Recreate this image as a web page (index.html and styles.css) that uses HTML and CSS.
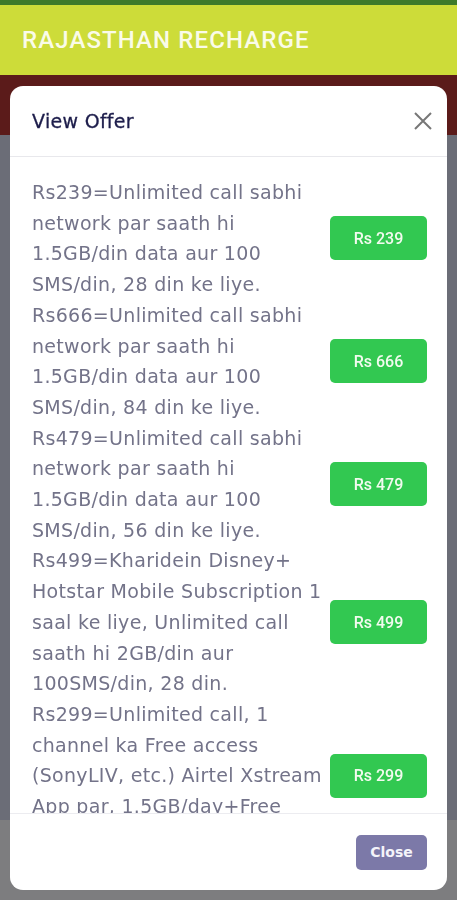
FILE: index.html
```html
<!DOCTYPE html>
<html lang="en">

<head>
    <meta charset="UTF-8">
    <meta name="viewport" content="width=device-width, initial-scale=1.0">
    <title>Rajasthan Recharge</title>
    <link rel="stylesheet" href="styles.css">
</head>

<body>
    <div class="topline"></div>
    <div class="header">
        <h1>RAJASTHAN RECHARGE</h1>
    </div>
    <div class="banner"></div>
    <div class="page"></div>

    <div class="backdrop">
        <div class="modal">
            <div class="modal-header">
                <h2>View Offer</h2>
                <button class="btn-x" aria-label="Close">
                    <svg width="20" height="20" viewBox="0 0 20 20">
                        <path d="M2 2 L18 18 M18 2 L2 18" stroke="#777" stroke-width="2" fill="none" />
                    </svg>
                </button>
            </div>

            <div class="modal-body">
                <div class="offer">
                    <p>Rs239=Unlimited call sabhi network par saath hi 1.5GB/din data aur 100 SMS/din, 28 din ke liye.</p>
                    <button class="btn-price">Rs 239</button>
                </div>
                <div class="offer">
                    <p>Rs666=Unlimited call sabhi network par saath hi 1.5GB/din data aur 100 SMS/din, 84 din ke liye.</p>
                    <button class="btn-price">Rs 666</button>
                </div>
                <div class="offer">
                    <p>Rs479=Unlimited call sabhi network par saath hi 1.5GB/din data aur 100 SMS/din, 56 din ke liye.</p>
                    <button class="btn-price">Rs 479</button>
                </div>
                <div class="offer">
                    <p>Rs499=Kharidein Disney+ Hotstar Mobile Subscription 1 saal ke liye, Unlimited call saath hi 2GB/din aur 100SMS/din, 28 din.</p>
                    <button class="btn-price">Rs 499</button>
                </div>
                <div class="offer">
                    <p>Rs299=Unlimited call, 1 channel ka Free access (SonyLIV, etc.) Airtel Xstream App par, 1.5GB/day+Free Hellotunes, 28 din.</p>
                    <button class="btn-price">Rs 299</button>
                </div>
            </div>

            <div class="modal-footer">
                <button class="btn-close">Close</button>
            </div>
        </div>
    </div>
</body>

</html>
```

FILE: styles.css
```css
:root {
    --lime: #cddc39;
    --green: #32c851;
    --muted: #7c79a8;
    --text: #737389;
}

body {
    margin: 0;
    font-family: 'DejaVu Sans', sans-serif;
    background: #6c6e77;
    height: 900px;
    overflow: hidden;
}

.topline {
    height: 5px;
    background: #3e7a2a;
}

.header {
    height: 70px;
    background: var(--lime);
    display: flex;
    align-items: center;
    padding: 0 22px;
}

.header h1 {
    margin: 0;
    color: #fafbe8;
    font-family: Roboto, sans-serif;
    font-weight: 500;
    font-size: 24px;
    letter-spacing: 1.1px;
}

.banner {
    height: 60px;
    background: #5b1b1a;
}

.page {
    height: 685px;
    background: #6b6d77;
    border-bottom: 80px solid #7d7d7f;
}

.backdrop {
    position: fixed;
    inset: 0;
    padding: 86px 10px 10px;
}

.modal {
    background: white;
    border-radius: 13px;
    height: 804px;
    display: flex;
    flex-direction: column;
    overflow: hidden;
}

.modal-header {
    height: 70px;
    flex-shrink: 0;
    border-bottom: 1px solid #e8e8ec;
    display: flex;
    align-items: center;
    justify-content: space-between;
    padding: 0 14px 0 22px;
}

.modal-header h2 {
    margin: 0;
    font-size: 19px;
    font-weight: normal;
    letter-spacing: 0.3px;
    color: #1d1d4b;
    -webkit-text-stroke: 0.3px #1d1d4b;
}

.btn-x {
    background: none;
    border: none;
    padding: 0;
    width: 20px;
    height: 20px;
}

.modal-body {
    flex: 1;
    overflow: hidden;
    padding: 20px 20px 0 22px;
}

.offer {
    display: flex;
    align-items: center;
    gap: 4px;
}

.offer p {
    flex: 1;
    margin: 0;
    font-size: 19px;
    letter-spacing: 0.3px;
    line-height: 30.7px;
    color: var(--text);
}

.btn-price {
    width: 97px;
    height: 44px;
    flex-shrink: 0;
    border: none;
    border-radius: 5px;
    background: var(--green);
    color: #f2fbef;
    font-family: Roboto, sans-serif;
    font-weight: 500;
    font-size: 16px;
}

.modal-footer {
    border-top: 1px solid #ececf0;
    height: 76px;
    flex-shrink: 0;
    display: flex;
    align-items: center;
    justify-content: flex-end;
    padding: 0 20px;
}

.btn-close {
    width: 71px;
    height: 35px;
    border: none;
    border-radius: 5px;
    background: var(--muted);
    color: #f4f4fa;
    font-family: 'DejaVu Sans', sans-serif;
    font-weight: bold;
    font-size: 14px;
}
```
